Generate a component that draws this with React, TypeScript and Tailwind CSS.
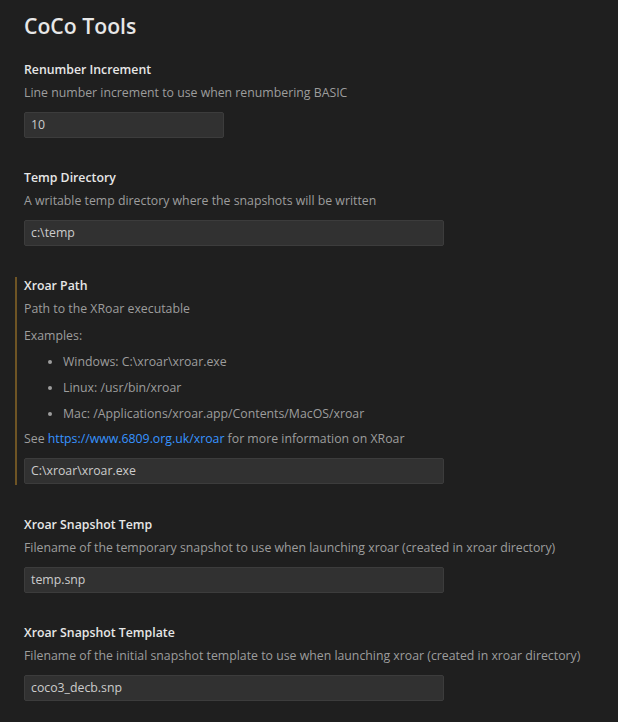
import React from "react";

const font = { fontFamily: '"Open Sans", "Noto Sans", sans-serif' };

function Input({ value, wide }: { value: string; wide?: boolean }) {
  return (
    <div
      className={`mt-[10px] h-[26px] ${wide ? "w-[420px]" : "w-[200px]"} rounded-[2px] border border-[#3c3c3c] bg-[#313131] px-[6px] text-[12.3px] leading-[24px] text-[#cccccc]`}
    >
      {value}
    </div>
  );
}

function Setting({
  title,
  desc,
  value,
  wide,
}: {
  title: string;
  desc: string;
  value: string;
  wide?: boolean;
}) {
  return (
    <div className="pl-[24px] pt-[12px] pb-[19px]">
      <div className="text-[12.3px] font-semibold leading-[18px] text-[#e7e7e7]">{title}</div>
      <div className="mt-[5px] text-[12.3px] leading-[18px] text-[#9d9d9d]">{desc}</div>
      <Input value={value} wide={wide} />
    </div>
  );
}

export default function App() {
  return (
    <div className="min-h-[722px] w-[618px] bg-[#1f1f1f]" style={font}>
      <div className="pl-[24px] pt-[11px] pb-[8px] text-[21.2px] font-semibold leading-[30px] text-[#e7e7e7]">
        CoCo Tools
      </div>
      <div className="flex flex-col">
        <Setting
          title="Renumber Increment"
          desc="Line number increment to use when renumbering BASIC"
          value="10"
        />
        <Setting
          title="Temp Directory"
          desc="A writable temp directory where the snapshots will be written"
          value="c:\temp"
          wide
        />
        <div className="pt-[15px] pb-[19px]">
          <div className="ml-[15px] border-l-2 border-[#6e5424] pb-[1px] pl-[7px]">
            <div className="-mt-[3px] text-[12.3px] font-semibold leading-[18px] text-[#e7e7e7]">
              Xroar Path
            </div>
            <div className="mt-[5px] text-[12.3px] leading-[18px] text-[#9d9d9d]">
              Path to the XRoar executable
            </div>
            <div className="mt-[9px] text-[12.3px] leading-[18px] text-[#9d9d9d]">Examples:</div>
            <ul className="mt-[8px] flex list-disc flex-col gap-[8px] pl-[39px] text-[12.3px] leading-[18px] text-[#9d9d9d] marker:text-[#9d9d9d]">
              <li>Windows: C:\xroar\xroar.exe</li>
              <li>Linux: /usr/bin/xroar</li>
              <li>Mac: /Applications/xroar.app/Contents/MacOS/xroar</li>
            </ul>
            <div className="mt-[7px] text-[12.3px] leading-[18px] text-[#9d9d9d]">
              See <span className="text-[#3794ff]">https://www.6809.org.uk/xroar</span> for more
              information on XRoar
            </div>
            <Input value="C:\xroar\xroar.exe" wide />
          </div>
        </div>
        <Setting
          title="Xroar Snapshot Temp"
          desc="Filename of the temporary snapshot to use when launching xroar (created in xroar directory)"
          value="temp.snp"
          wide
        />
        <Setting
          title="Xroar Snapshot Template"
          desc="Filename of the initial snapshot template to use when launching xroar (created in xroar directory)"
          value="coco3_decb.snp"
          wide
        />
      </div>
    </div>
  );
}
